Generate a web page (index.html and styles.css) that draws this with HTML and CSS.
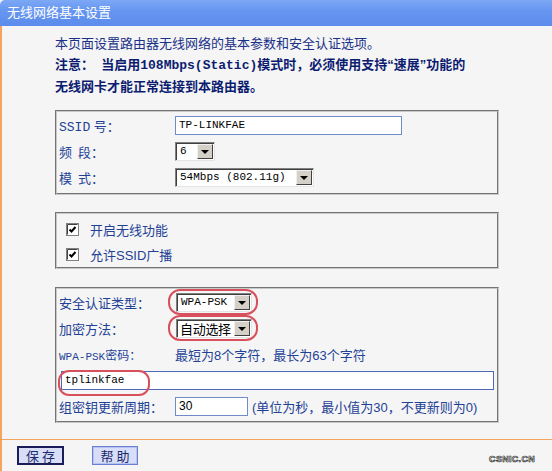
FILE: index.html
```html
<!DOCTYPE html>
<html lang="zh-CN">

<head>
    <meta charset="UTF-8">
    <title>无线网络基本设置</title>
    <link rel="stylesheet" href="styles.css">
</head>

<body>
    <div class="titleBar">无线网络基本设置</div>
    <div class="main">
        <div class="content">
            <p class="intro">本页面设置路由器无线网络的基本参数和安全认证选项。</p>
            <p class="intro notice">注意：&nbsp; 当启用<span class="mono">108Mbps(Static)</span>模式时，必须使用支持“速展”功能的</p>
            <p class="intro notice">无线网卡才能正常连接到本路由器。</p>

            <div class="group group-basic">
                <div class="row">
                    <span class="label"><span class="mono">SSID</span> 号：</span>
                    <input class="text ssid" type="text" value="TP-LINKFAE">
                </div>
                <div class="row">
                    <span class="label">频<i class="sp"></i>段：</span>
                    <div class="select w-channel"><span class="val mono">6</span><span class="arrow"></span></div>
                </div>
                <div class="row">
                    <span class="label">模<i class="sp"></i>式：</span>
                    <div class="select w-mode"><span class="val mono">54Mbps (802.11g)</span><span class="arrow"></span></div>
                </div>
            </div>

            <div class="group group-switch">
                <div class="row row-check">
                    <svg class="check" width="13" height="13" viewBox="0 0 13 13">
                        <rect x="0.5" y="0.5" width="12" height="12" fill="#fff" stroke="#808080" />
                        <path d="M1.5 11.5V1.5H11.5" fill="none" stroke="#404040" />
                        <path d="M3.5 6.5l2 2 4-4.5" fill="none" stroke="#000" stroke-width="2" />
                    </svg>
                    <span>开启无线功能</span>
                </div>
                <div class="row row-check">
                    <svg class="check" width="13" height="13" viewBox="0 0 13 13">
                        <rect x="0.5" y="0.5" width="12" height="12" fill="#fff" stroke="#808080" />
                        <path d="M1.5 11.5V1.5H11.5" fill="none" stroke="#404040" />
                        <path d="M3.5 6.5l2 2 4-4.5" fill="none" stroke="#000" stroke-width="2" />
                    </svg>
                    <span>允许SSID广播</span>
                </div>
            </div>

            <div class="group group-security">
                <div class="row">
                    <span class="label">安全认证类型：</span>
                    <div class="mark mark-select">
                        <div class="select w-auth"><span class="val mono">WPA-PSK</span><span class="arrow"></span></div>
                    </div>
                </div>
                <div class="row">
                    <span class="label">加密方法：</span>
                    <div class="mark mark-select">
                        <div class="select w-auth"><span class="val cjk">自动选择</span><span class="arrow"></span></div>
                    </div>
                </div>
                <div class="row">
                    <span class="label small"><span class="mono">WPA-PSK</span>密码：</span>
                    <span>最短为8个字符，最长为63个字符</span>
                </div>
                <div class="row row-key">
                    <div class="mark mark-key">
                        <input class="text key" type="text" value="tplinkfae">
                    </div>
                </div>
                <div class="row">
                    <span class="label">组密钥更新周期：</span>
                    <input class="text period" type="text" value="30">
                    <span class="hint">(单位为秒，最小值为30，不更新则为0)</span>
                </div>
            </div>
        </div>

        <div class="formBar">
            <button type="button" class="btn btn-save">保&nbsp;存</button>
            <button type="button" class="btn btn-help">帮&nbsp;助</button>
            <span class="stamp">CSNIC.CN</span>
        </div>
    </div>
</body>

</html>
```

FILE: styles.css
```css
* {
    padding: 0;
    margin: 0;
    box-sizing: border-box;
}

html,
body {
    width: 100%;
    height: 100%;
}

body {
    background: #F5F5F5;
    font-family: "Liberation Sans", "Noto Sans CJK SC", sans-serif;
    font-size: 13px;
    color: #1F4295;
    overflow: hidden;
}

.mono {
    font-family: "Liberation Mono", "Noto Sans CJK SC", monospace;
}

/* 标题栏 */
.titleBar {
    height: 26px;
    line-height: 26px;
    padding-left: 7px;
    color: #FFFFFF;
    background-image: linear-gradient(180deg, #7DA8F6 0%, #6696F0 40%, #5C8CEC 100%);
    border-top-left-radius: 5px;
}

.main {
    border-left: 2px solid #F4A45C;
    height: calc(100% - 26px);
}

.content {
    padding: 7px 0 0 53px;
}

.intro {
    line-height: 21px;
    color: #1A3188;
}

.notice {
    font-weight: bold;
    color: #0C1C70;
}

/* 分组框 */
.group {
    width: 444px;
    border: 2px groove #C8C8C8;
    padding: 0 0 0 2px;
}

.group-basic {
    margin-top: 13px;
    padding-bottom: 3px;
}

.group-switch {
    margin-top: 17px;
    padding-top: 3px;
}

.group-security {
    margin-top: 18px;
    padding-bottom: 2px;
}

.row {
    display: flex;
    align-items: center;
    height: 26px;
    white-space: nowrap;
}

.label {
    width: 116px;
    flex: none;
}

.label .sp {
    display: inline-block;
    width: 6px;
}

.label.small {
    font-size: 12px;
}

.label.small .mono {
    font-size: 11px;
}

.row-check {
    height: 25px;
    padding-left: 7px;
}

.row-check .check {
    margin-right: 11px;
}

/* 输入框 */
.text {
    height: 19px;
    border: 1px solid #6F8BC8;
    background: #FFFFFF;
    font-family: "Liberation Mono", monospace;
    font-size: 11px;
    color: #000000;
    padding: 0 3px;
    outline: none;
}

.ssid {
    width: 227px;
}

.key {
    width: 433px;
    border-color: #5068B8;
}

.period {
    width: 73px;
    font-family: "Liberation Sans", sans-serif;
    font-size: 12px;
}

.row-key {
    padding-left: 2px;
}

.hint {
    margin-left: 4px;
}

/* 下拉框 */
.select {
    display: flex;
    align-items: center;
    height: 19px;
    background: #FFFFFF;
    border-top: 1px solid #808080;
    border-left: 1px solid #808080;
    border-right: 1px solid #E4E4E4;
    border-bottom: 1px solid #E4E4E4;
    box-shadow: inset 1px 1px 0 #404040;
    padding: 1px 1px 1px 4px;
    color: #000000;
    font-size: 11px;
}

.select .val {
    flex: 1;
    white-space: nowrap;
}

.select .arrow {
    flex: none;
    width: 16px;
    height: 15px;
    background: #D4D0C8;
    border-top: 1px solid #F0F0F0;
    border-left: 1px solid #F0F0F0;
    border-right: 1px solid #404040;
    border-bottom: 1px solid #404040;
    position: relative;
}

.select .arrow::after {
    content: "";
    position: absolute;
    left: 3px;
    top: 5px;
    border-left: 4px solid transparent;
    border-right: 4px solid transparent;
    border-top: 4px solid #000000;
}

.w-channel {
    width: 40px;
}

.w-mode {
    width: 139px;
}

.w-auth {
    width: 76px;
}

.w-auth .cjk {
    font-size: 13px;
    font-family: "Noto Sans CJK SC", sans-serif;
    letter-spacing: -0.3px;
    margin-left: -1px;
}

/* 红色标注圈 */
.mark {
    position: relative;
}

.mark-select {
    margin-left: 1px;
}

.mark-select::after {
    content: "";
    position: absolute;
    top: -4px;
    bottom: -3px;
    left: -8px;
    right: -6px;
    border: 2px solid #D8505C;
    border-radius: 12px;
}

.mark-key::after {
    content: "";
    position: absolute;
    top: -1px;
    left: -3px;
    width: 88px;
    height: 22px;
    border: 2px solid #D8505C;
    border-radius: 11px;
}

/* 底部按钮 */
.formBar {
    margin-top: 16px;
    border-top: 1px solid #F4A45C;
    padding: 6px 17px 0 15px;
    display: flex;
    align-items: flex-end;
}

.btn {
    height: 19px;
    background: #D8DDF8;
    color: #1A2A6A;
    font-family: "Noto Sans CJK SC", sans-serif;
    font-size: 13px;
    line-height: 15px;
}

.btn-save {
    width: 47px;
    border: 2px solid #1C1C58;
}

.btn-help {
    width: 46px;
    margin-left: 28px;
    border: 1px solid #6A7FD0;
    box-shadow: inset 0 0 0 1px #B8C4F0;
}

.stamp {
    margin-left: auto;
    font-family: "Liberation Sans", sans-serif;
    font-size: 9px;
    font-weight: bold;
    color: #FFFFFF;
    -webkit-text-stroke: 0.6px #222222;
    letter-spacing: 0.3px;
    margin-bottom: 1px;
}
```
